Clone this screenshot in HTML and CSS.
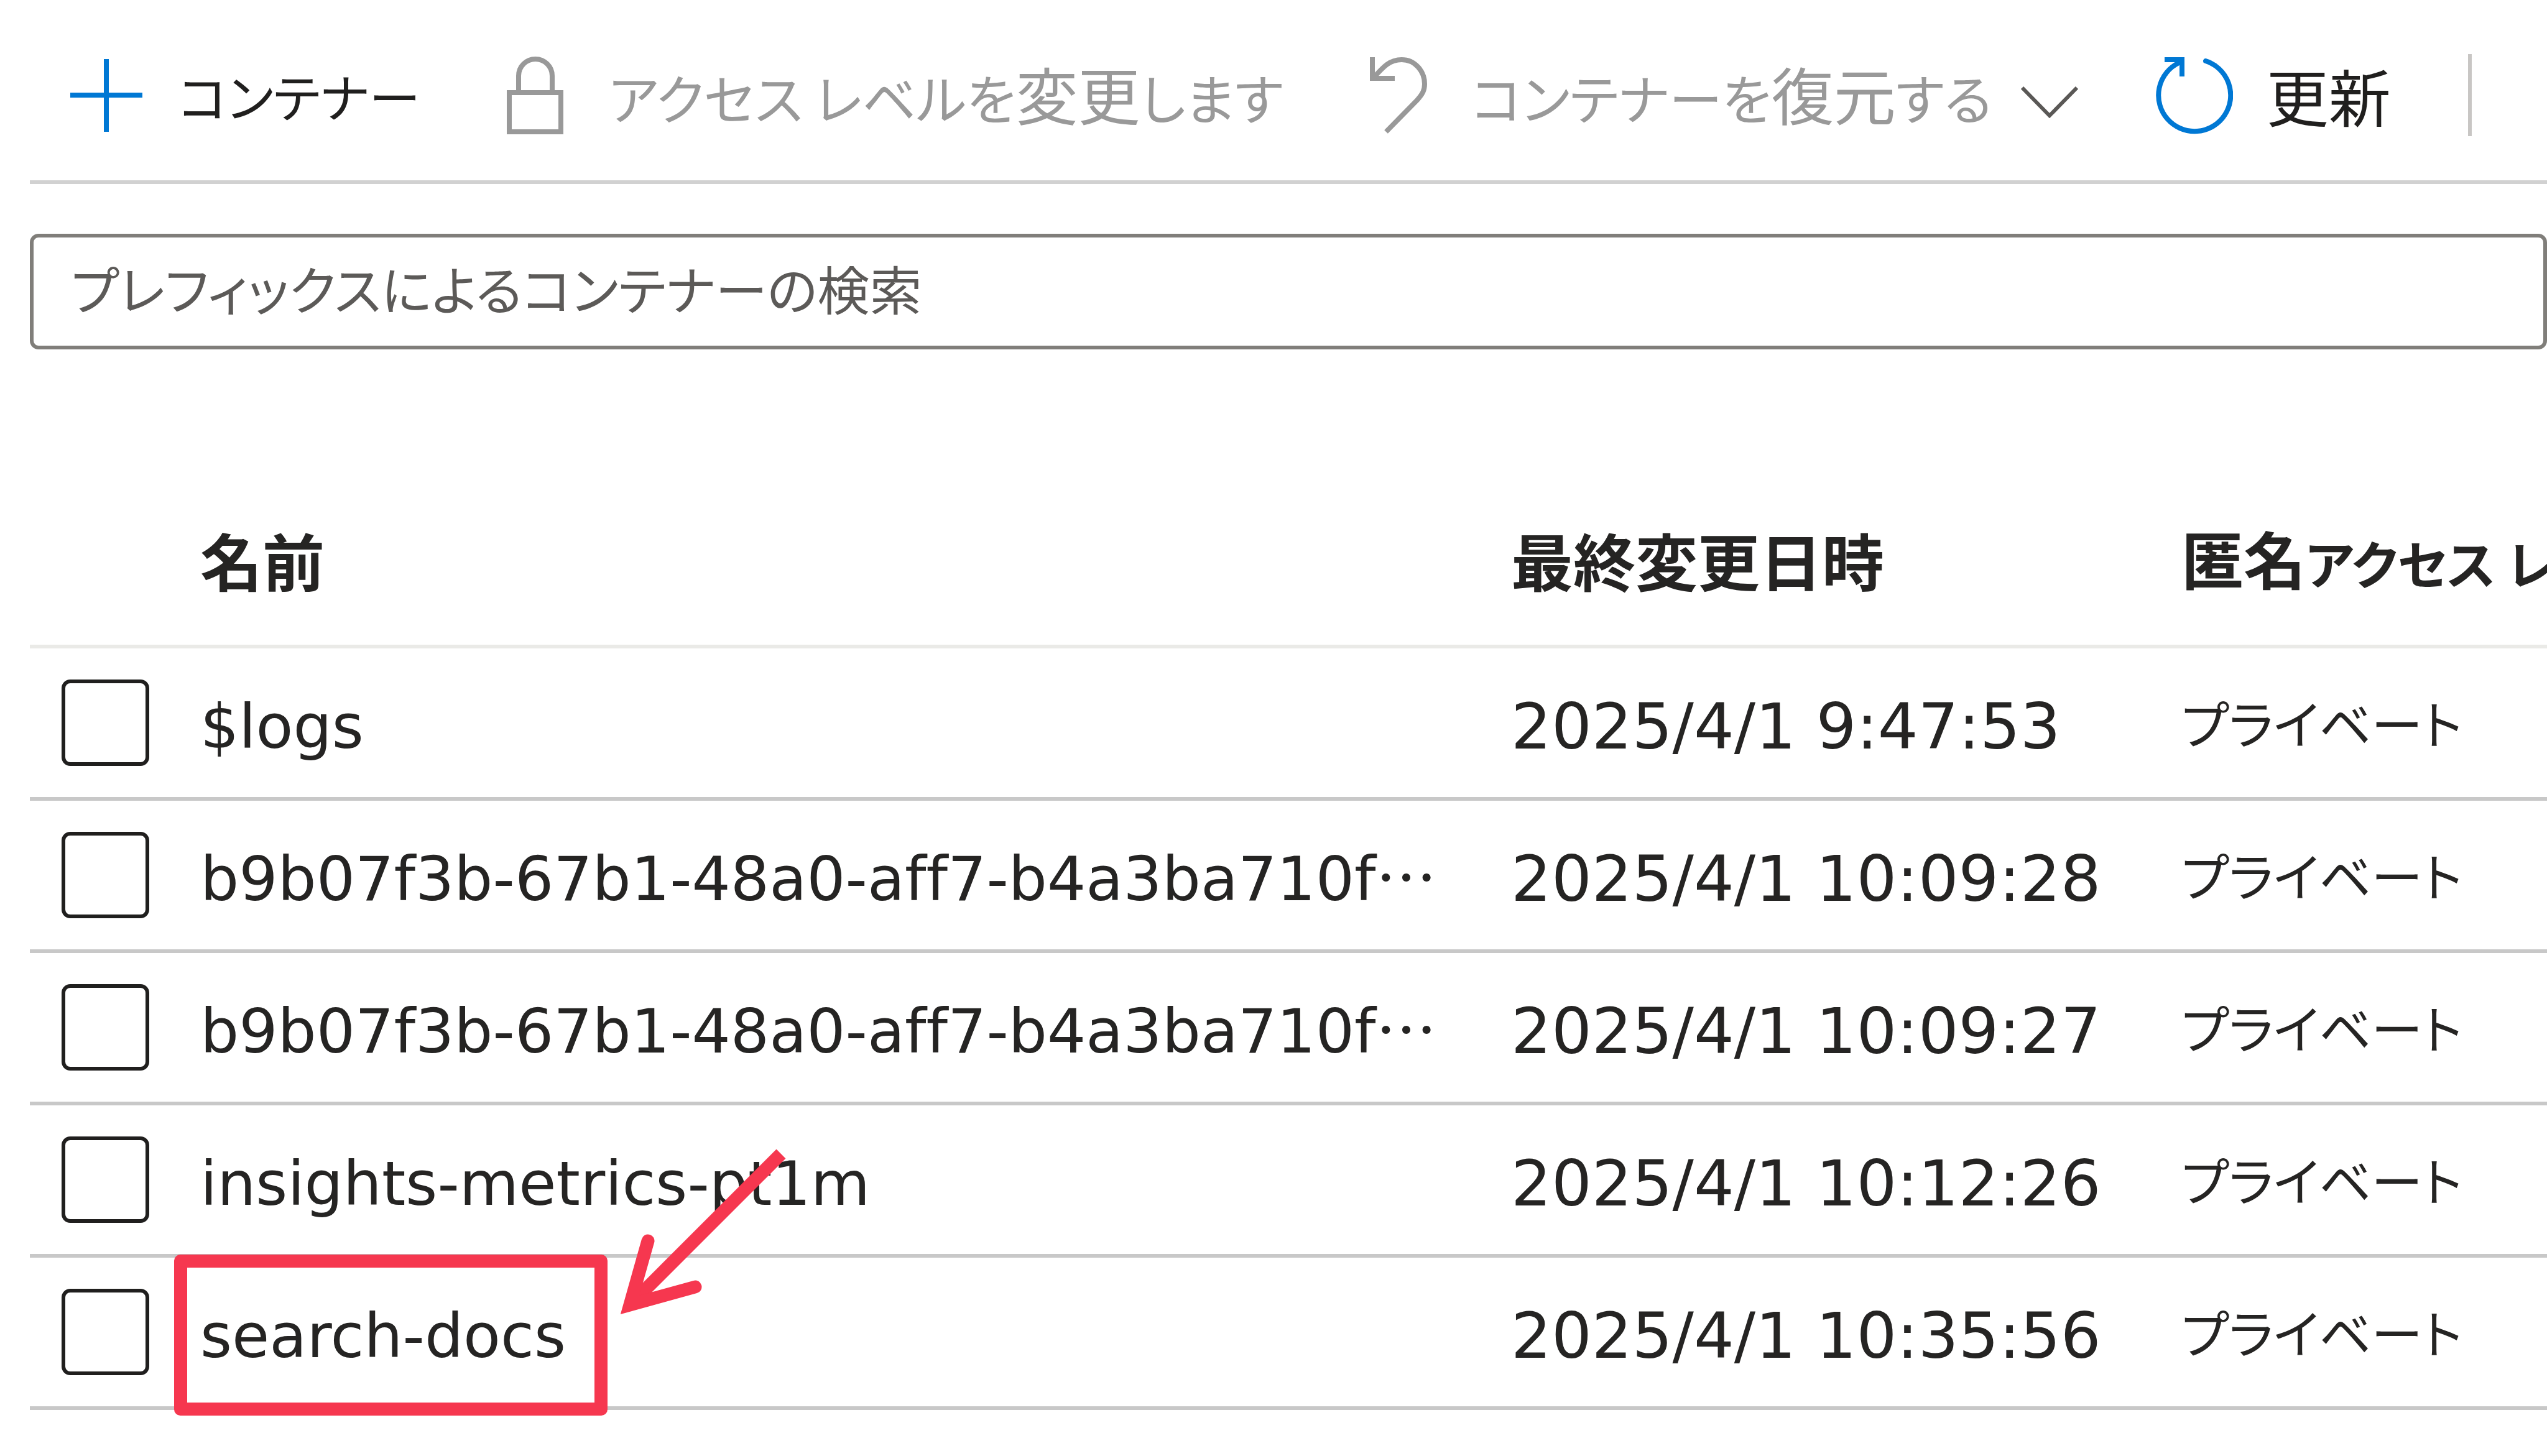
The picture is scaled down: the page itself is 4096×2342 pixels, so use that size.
FILE: index.html
```html
<!DOCTYPE html>
<html lang="ja">
<head>
<meta charset="utf-8">
<meta name="viewport" content="width=device-width">
<title>コンテナー</title>
<link rel="stylesheet" href="styles.css">
</head>
<body>
<main class="page">
  <div class="toolbar" role="toolbar" aria-label="コンテナーの操作">
    <button class="command" type="button">
      <svg class="icon icon-blue" viewBox="0 0 125 125" aria-hidden="true"><path d="M63 4V121M5 62H121"/></svg>
      <span>コンテナー</span>
    </button>
    <button class="command command-disabled" type="button" disabled>
      <svg class="icon" viewBox="0 0 125 125" aria-hidden="true"><path d="M19 58H102V121H19ZM34 57V31A27 27 0 0 1 88 31V57"/></svg>
      <span>アクセス レベルを<span class="kanji">変更</span>します</span>
    </button>
    <button class="command command-disabled" type="button" disabled>
      <svg class="icon" viewBox="0 0 125 125" aria-hidden="true"><path d="M20 1V35H56"/><path d="M22 34C38 16 48 5 67 5C89 5 104 24 104 44C104 54 101 60 92 70L42 121"/></svg>
      <span>コンテナーを<span class="kanji">復元</span>する</span>
      <svg class="chevron" viewBox="0 0 92 74" aria-hidden="true"><path d="M2 25L46 70L90 25"/></svg>
    </button>
    <button class="command" type="button">
      <svg class="icon icon-blue" viewBox="0 0 125 125" aria-hidden="true"><path stroke-linecap="round" d="M81 7A58 58 0 1 1 38 10"/><path d="M15 5H43V32"/></svg>
      <span class="kanji">更新</span>
    </button>
    <span class="separator"></span>
  </div>

  <input class="search" type="text" aria-label="コンテナーの検索" placeholder="プレフィックスによるコンテナーの検索">

  <table class="containers">
    <colgroup>
      <col class="col-check">
      <col>
      <col class="col-date">
      <col class="col-access">
    </colgroup>
    <thead>
      <tr>
        <th></th>
        <th scope="col">名前</th>
        <th scope="col">最終変更日時</th>
        <th scope="col">匿名<span class="kana">アクセス レベル</span></th>
      </tr>
    </thead>
    <tbody>
      <tr>
        <td><input class="check" type="checkbox" aria-label="$logs"></td>
        <td class="name">$logs</td>
        <td class="date">2025/4/1 9:47:53</td>
        <td class="kana">プライベート</td>
      </tr>
      <tr>
        <td><input class="check" type="checkbox" aria-label="b9b07f3b 1"></td>
        <td class="name">b9b07f3b-67b1-48a0-aff7-b4a3ba710f<span class="more">…</span></td>
        <td class="date">2025/4/1 10:09:28</td>
        <td class="kana">プライベート</td>
      </tr>
      <tr>
        <td><input class="check" type="checkbox" aria-label="b9b07f3b 2"></td>
        <td class="name">b9b07f3b-67b1-48a0-aff7-b4a3ba710f<span class="more">…</span></td>
        <td class="date">2025/4/1 10:09:27</td>
        <td class="kana">プライベート</td>
      </tr>
      <tr>
        <td><input class="check" type="checkbox" aria-label="insights-metrics-pt1m"></td>
        <td class="name">insights-metrics-pt1m</td>
        <td class="date">2025/4/1 10:12:26</td>
        <td class="kana">プライベート</td>
      </tr>
      <tr>
        <td><input class="check" type="checkbox" aria-label="search-docs"></td>
        <td class="name marked">search-docs
          <span class="frame"></span>
          <svg class="arrow" viewBox="990 1840 280 280" aria-hidden="true"><path d="M1256 1856L1013 2099"/><path class="arrow-head" d="M1042 1996L1013 2099L1118 2070"/></svg>
        </td>
        <td class="date">2025/4/1 10:35:56</td>
        <td class="kana">プライベート</td>
      </tr>
    </tbody>
  </table>
</main>
</body>
</html>
```
FILE: styles.css
```css
* {
  box-sizing: border-box;
}

body {
  margin: 0;
  background: #fff;
  color: #252423;
  font-family: "Noto Sans CJK JP", sans-serif;
  font-feature-settings: "palt";
}

.page {
  min-height: 100vh;
  padding-left: 48px;
  overflow: hidden;
}

/* Command bar */
.toolbar {
  display: flex;
  align-items: center;
  gap: 124px;
  height: 296px;
  padding: 16px 0 0 60px;
  border-bottom: 6px solid #d1d1d1;
}

.command {
  display: flex;
  flex: none;
  align-items: center;
  gap: 54px;
  padding: 0;
  border: 0;
  background: none;
  color: #201f1e;
  font-family: inherit;
  font-feature-settings: inherit;
  font-size: 83px;
  line-height: 120px;
  white-space: nowrap;
}

.command-disabled {
  color: #999;
  font-size: 86px;
}

.kanji {
  font-size: 100px;
}

.icon {
  flex: none;
  width: 125px;
  height: 125px;
  fill: none;
  stroke: currentColor;
  stroke-width: 8px;
}

.icon-blue {
  stroke: #0078d4;
}

.chevron {
  flex: none;
  width: 92px;
  height: 74px;
  margin-left: -8px;
  fill: none;
  stroke: #5a5856;
  stroke-width: 6px;
}

.separator {
  width: 6px;
  height: 132px;
  background: #c8c6c4;
}

/* Search box */
.search {
  display: block;
  width: 100%;
  height: 186px;
  margin-top: 80px;
  padding: 0 60px 14px 60px;
  border: 6px solid #807e7a;
  border-radius: 14px;
  background: #fff;
  color: #201f1e;
  font-family: inherit;
  font-feature-settings: inherit;
  font-size: 84px;
}

.search::placeholder {
  color: #5c5a58;
  opacity: 1;
}

/* Container list */
.containers {
  width: 100%;
  margin-top: 201px;
  border-spacing: 0;
  table-layout: fixed;
}

.col-check {
  width: 274px;
}

.col-date {
  width: 1078px;
}

.col-access {
  width: 588px;
}

th,
td {
  height: 245px;
  padding: 0;
  border-bottom: 6px solid #c8c8c8;
  line-height: 120px;
  text-align: left;
  vertical-align: middle;
  white-space: nowrap;
}

th {
  height: 280px;
  overflow: hidden;
  border-bottom-color: #eaeae7;
  font-size: 100px;
  font-weight: 700;
}

.kana {
  font-size: 83px;
}

td.kana {
  padding-bottom: 4px;
}

.name,
.date {
  padding-top: 12px;
  font-family: "DejaVu Sans", sans-serif;
}

.name {
  font-size: 98px;
  font-variant-ligatures: none;
}

.date {
  font-size: 102px;
}

.more {
  font-family: "Noto Sans CJK JP", sans-serif;
  font-feature-settings: normal;
  line-height: 100px;
}

.check {
  display: block;
  width: 141px;
  height: 139px;
  margin: 0 0 0 51px;
  appearance: none;
  border: 6px solid #201f1e;
  border-radius: 14px;
  background: #fff;
}

/* Annotation over the last row */
.marked {
  position: relative;
}

.frame {
  position: absolute;
  top: -5px;
  left: -42px;
  width: 697px;
  height: 259px;
  border: 21px solid #f6374f;
  border-radius: 10px;
}

.arrow {
  position: absolute;
  top: -183px;
  left: 668px;
  width: 280px;
  height: 280px;
  fill: none;
  stroke: #f6374f;
  stroke-width: 21px;
}

.arrow-head {
  stroke-linecap: round;
  stroke-miterlimit: 8;
}
```
